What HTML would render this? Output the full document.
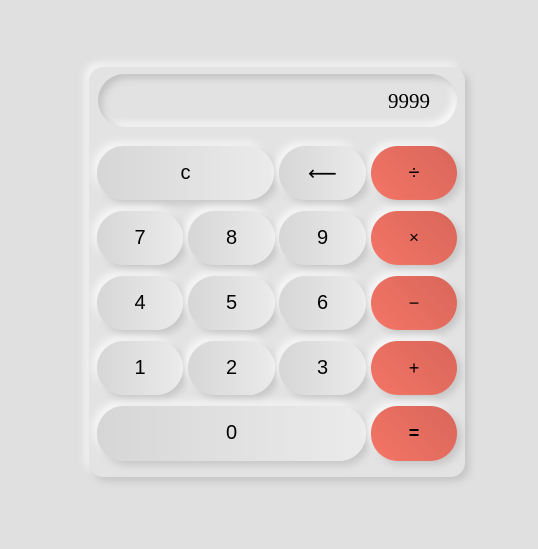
<!DOCTYPE html>
<html><head><style>
body{margin:0;width:538px;height:549px;background:#e0e0e0;position:relative;overflow:hidden;font-family:"Liberation Sans",sans-serif;}
.calc{position:absolute;left:89px;top:67px;width:376px;height:410px;border-radius:14px;background:#e3e3e3;box-shadow:4px 4px 8px #c4c4c4,-4px -4px 8px #f6f6f6;}
.disp{position:absolute;left:98px;top:74px;width:359px;height:53px;border-radius:27px;background:#e2e2e2;box-shadow:inset 4px 4px 8px #c2c2c2,inset -4px -4px 8px #fafafa;font-family:"Liberation Serif",serif;font-size:21px;text-align:right;box-sizing:border-box;padding-right:27px;line-height:55px;color:#000;}
.b{position:absolute;height:54px;border-radius:27px;background:linear-gradient(90deg,#d6d6d6,#ebebeb);box-shadow:4px 4px 8px #c6c6c6,-4px -4px 8px #f8f8f8;text-align:center;line-height:54px;font-size:20px;color:#000;}
.o{background:linear-gradient(45deg,#f47566,#d8665a);font-size:18px;}
</style></head><body>
<div class="calc"></div>
<div class="disp">9999</div>
<div class="b" style="left:97px;top:146px;width:177px">c</div>
<div class="b" style="left:279px;top:146px;width:87px;font-family:'DejaVu Sans';font-size:20px">⟵</div>
<div class="b o" style="left:371px;top:146px;width:86px;font-size:20px">÷</div>
<div class="b" style="left:97px;top:211px;width:86px">7</div>
<div class="b" style="left:188px;top:211px;width:87px">8</div>
<div class="b" style="left:279px;top:211px;width:87px">9</div>
<div class="b o" style="left:371px;top:211px;width:86px;font-size:17px">×</div>
<div class="b" style="left:97px;top:276px;width:86px">4</div>
<div class="b" style="left:188px;top:276px;width:87px">5</div>
<div class="b" style="left:279px;top:276px;width:87px">6</div>
<div class="b o" style="left:371px;top:276px;width:86px">−</div>
<div class="b" style="left:97px;top:341px;width:86px">1</div>
<div class="b" style="left:188px;top:341px;width:87px">2</div>
<div class="b" style="left:279px;top:341px;width:87px">3</div>
<div class="b o" style="left:371px;top:341px;width:86px">+</div>
<div class="b" style="left:97px;top:406px;width:269px;height:55px">0</div>
<div class="b o" style="left:371px;top:406px;width:86px;height:55px;font-weight:bold">=</div>
</body></html>
